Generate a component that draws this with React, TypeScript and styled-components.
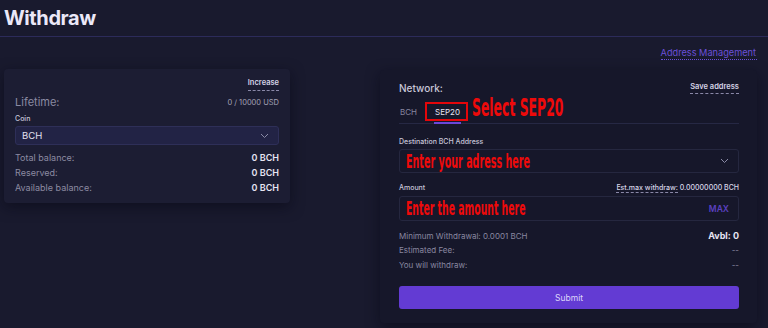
import styled, {createGlobalStyle} from "styled-components";

const GlobalStyle = createGlobalStyle`
  body {
    margin: 0;
    background: #191a2e;
    font-family: Inter, "Noto Sans", sans-serif;
    color: #e4e2f2;
  }
`;

const Page = styled.div`
  width: 768px;
  height: 328px;
  overflow: hidden;
`;

const Header = styled.header`
  height: 36px;
  padding: 0 4px;
  display: flex;
  align-items: center;
  border-bottom: 1px solid #2c2b5a;
`;

const Title = styled.h1`
  margin: 0;
  font-size: 20px;
  font-weight: 700;
  letter-spacing: -0.4px;
  color: #ebe8f8;
`;

const Content = styled.div`
  padding: 0 11px 0 4px;
`;

const LinkRow = styled.div`
  display: flex;
  justify-content: flex-end;
  height: 32px;
  align-items: center;
`;

const DottedLink = styled.a`
  font-size: 9.2px;
  color: #6b50d8;
  text-decoration: none;
  border-bottom: 1px dotted #6b50d8;
  line-height: 12px;
  padding-right: 1px;
`;

const Cards = styled.div`
  display: flex;
  justify-content: space-between;
  align-items: flex-start;
`;

const Card = styled.div<{ $wide?: boolean }>`
  width: ${p => (p.$wide ? "377px" : "286px")};
  margin-top: ${p => (p.$wide ? "1px" : "0")};
  box-sizing: border-box;
  padding: ${p => (p.$wide ? "11px 18px 14px 19px" : "9px 11px 8px 11px")};
  background: ${p => (p.$wide ? "#16172a" : "#1c1d33")};
  border-radius: 4px;
  box-shadow: 0 4px 14px rgba(8, 8, 20, 0.55);
`;

const Row = styled.div<{ $h?: number }>`
  display: flex;
  justify-content: space-between;
  align-items: center;
  height: ${p => p.$h ?? 15}px;
`;

const EndRow = styled.div`
  display: flex;
  justify-content: flex-end;
  height: 13px;
`;

const DashedNote = styled.span`
  font-size: 7.5px;
  font-weight: 600;
  color: #d6d4e6;
  border-bottom: 1px dashed #8a88a8;
  line-height: 10px;
  padding-bottom: 1px;
`;

const BigLabel = styled.span`
  font-size: 11px;
  color: #8a8aa2;
`;

const SmallValue = styled.span`
  font-size: 7.5px;
  color: #a3a2b6;
`;

const FieldLabel = styled.div<{ $h?: number }>`
  font-size: 7px;
  font-weight: 500;
  color: #c6c4d8;
  height: ${p => p.$h ?? 15}px;
  display: flex;
  align-items: center;
  justify-content: space-between;
`;

const Select = styled.div<{ $filled?: boolean; $h: number }>`
  height: ${p => p.$h}px;
  box-sizing: border-box;
  display: flex;
  align-items: center;
  justify-content: space-between;
  padding: 0 9px 0 6px;
  background: ${p => (p.$filled ? "#222345" : "transparent")};
  border: 1px solid ${p => (p.$filled ? "#2e2f58" : "#25273f")};
  border-radius: 3px;
  overflow: hidden;
`;

const SelectText = styled.span`
  font-size: 9.5px;
  color: #e2e0f0;
`;

const Chevron = () => (
  <svg width="9" height="6" viewBox="0 0 9 6" fill="none">
    <path d="M1 1l3.5 3.5L8 1" stroke="#8a8aa6" strokeWidth="1" />
  </svg>
);

const StatLabel = styled.span`
  font-size: 9px;
  color: #8c8ba2;
`;

const StatValue = styled.span<{ $bold?: boolean }>`
  font-size: 9px;
  font-weight: ${p => (p.$bold ? 700 : 600)};
  color: #e6e4f2;
`;

const NetLabel = styled.span`
  font-size: 10px;
  font-weight: 500;
  color: #c8c6d8;
`;

const Tabs = styled.div`
  display: flex;
  align-items: flex-end;
  gap: 16px;
  height: 28px;
  border-bottom: 1px solid #262844;
`;

const Tab = styled.span<{ $active?: boolean }>`
  position: relative;
  font-size: 8px;
  color: ${p => (p.$active ? "#e6e4f2" : "#8886a0")};
  padding: 0 1px 5px;
  line-height: 10px;
  border-bottom: 2px solid ${p => (p.$active ? "#6b46d8" : "transparent")};
  margin-bottom: -1px;
`;

const RedBox = styled.span`
  position: absolute;
  left: -9px;
  right: -7px;
  top: -5px;
  bottom: 1px;
  border: 2px solid #e4060a;
`;

const Callout = styled.span<{ $size: number; $w: number }>`
  display: inline-block;
  font-family: "DejaVu Sans Condensed", "DejaVu Sans", sans-serif;
  font-weight: 700;
  font-size: ${p => p.$size}px;
  line-height: 1;
  color: #ee0a0a;
  white-space: nowrap;
  transform: scaleX(${p => p.$w});
  transform-origin: left center;
`;

const TabCallout = styled.span`
  position: absolute;
  left: 38px;
  top: -11px;
`;

const EstNote = styled.span`
  font-size: 7px;
  color: #d8d6e8;
  font-weight: 500;
`;

const Dashed = styled.span`
  border-bottom: 1px dashed #8a88a8;
`;

const MaxText = styled.span`
  font-size: 8.5px;
  font-weight: 600;
  color: #5a40c0;
`;

const InfoLabel = styled.span`
  font-size: 8px;
  color: #8987a0;
`;

const SubmitButton = styled.button`
  margin-top: 14px;
  width: 100%;
  height: 23px;
  border: none;
  border-radius: 3px;
  background: #633bd3;
  color: #ddd6fa;
  font-family: Inter, sans-serif;
  font-size: 8.5px;
`;

const Gap = styled.div<{ $h: number }>`
  height: ${p => p.$h}px;
`;

export default function App() {
  return (
    <Page>
      <GlobalStyle />
      <Header>
        <Title>Withdraw</Title>
      </Header>
      <Content>
        <LinkRow>
          <DottedLink>Address Management</DottedLink>
        </LinkRow>
        <Cards>
          <Card>
            <EndRow>
              <DashedNote>Increase</DashedNote>
            </EndRow>
            <Row $h={22}>
              <BigLabel>Lifetime:</BigLabel>
              <SmallValue>0 / 10000 USD</SmallValue>
            </Row>
            <FieldLabel $h={10}>Coin</FieldLabel>
            <Gap $h={3} />
            <Select $filled $h={19}>
              <SelectText>BCH</SelectText>
              <Chevron />
            </Select>
            <Gap $h={5} />
            <Row>
              <StatLabel>Total balance:</StatLabel>
              <StatValue>0 BCH</StatValue>
            </Row>
            <Row>
              <StatLabel>Reserved:</StatLabel>
              <StatValue>0 BCH</StatValue>
            </Row>
            <Row>
              <StatLabel>Available balance:</StatLabel>
              <StatValue>0 BCH</StatValue>
            </Row>
          </Card>
          <Card $wide>
            <Row $h={14}>
              <NetLabel>Network:</NetLabel>
              <DashedNote>Save address</DashedNote>
            </Row>
            <Tabs>
              <Tab>BCH</Tab>
              <Tab $active>
                SEP20
                <RedBox />
                <TabCallout>
                  <Callout $size={24} $w={0.575}>Select SEP20</Callout>
                </TabCallout>
              </Tab>
            </Tabs>
            <Gap $h={9} />
            <FieldLabel $h={16}>Destination BCH Address</FieldLabel>
            <Select $h={24}>
              <Callout $size={19} $w={0.56}>Enter your adress here</Callout>
              <Chevron />
            </Select>
            <Gap $h={5} />
            <FieldLabel $h={18}>
              Amount
              <EstNote>
                <Dashed>Est.max withdraw:</Dashed> 0.00000000 BCH
              </EstNote>
            </FieldLabel>
            <Select $h={25}>
              <Callout $size={19} $w={0.545}>Enter the amount here</Callout>
              <MaxText>MAX</MaxText>
            </Select>
            <Gap $h={7} />
            <Row $h={15}>
              <InfoLabel>Minimum Withdrawal: 0.0001 BCH</InfoLabel>
              <StatValue $bold>Avbl: 0</StatValue>
            </Row>
            <Row $h={14}>
              <InfoLabel>Estimated Fee:</InfoLabel>
              <InfoLabel>--</InfoLabel>
            </Row>
            <Row $h={15}>
              <InfoLabel>You will withdraw:</InfoLabel>
              <InfoLabel>--</InfoLabel>
            </Row>
            <SubmitButton>Submit</SubmitButton>
          </Card>
        </Cards>
      </Content>
    </Page>
  );
}
